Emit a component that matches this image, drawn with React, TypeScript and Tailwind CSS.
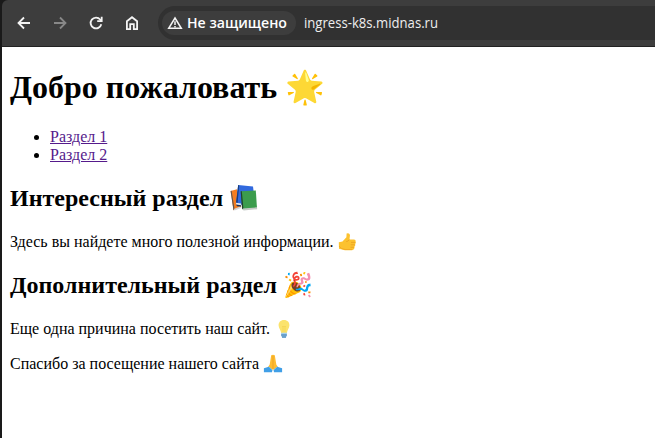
function Books() {
  return (
    <svg className="ml-[6px] h-[28px] w-[30px]" viewBox="0 0 30 28">
      <path d="M1.6 7 8 5.3 12 23 4.5 26.3Z" fill="#f47d20" />
      <path d="M1.6 7 2.6 6.7 5.6 25.4 4.5 26.3Z" fill="#5b5450" />
      <path d="M4.8 25 11 22.4 12 24 5.5 26.6Z" fill="#d5d5d5" />
      <path d="M9.2 1 24 2.4 25.5 14 12 21 7 19Z" fill="#3169de" />
      <path d="M9.2 1 10.2 1.2 8.5 19.5 7 19Z" fill="#173c7c" />
      <path d="M7 18.8 12 19.5 12 21.4 7.2 20.8Z" fill="#e2e5e8" />
      <path d="M7 20.5 12 21.2 12 22.6 8 22.2Z" fill="#18345e" />
      <path d="M11.7 7.3 26.8 6.4 28 24.2 13.5 25.4Z" fill="#3b9c4d" />
      <path d="M11.7 7.3 12.8 7.2 14.5 25 13 25Z" fill="#21402b" />
      <path d="M13.5 24.4 28 23.3 28.2 25.2 14.5 26.6Z" fill="#c4c9c5" />
    </svg>
  );
}

function ThumbsUp() {
  return (
    <svg className="ml-[3px] h-[20px] w-[20px] shrink-0" viewBox="0 0 20 20">
      <path d="M1.8 10.2 5.5 9.6 9.4 5.2 9.6 1.5Q12.3.4 13 3L12.5 7.4H17Q19 7.5 18.6 9.6 19.3 11 18.2 12.1 18.7 13.8 17.5 14.6 17.8 17.7 15 18.2H8L2 16.8Z" fill="#fcc22f" />
      <path d="M12.3 7.6Q11 9.6 9.3 9.6M14 10.4H18.2M13.7 12.8H17.8M13.5 15.3H17" fill="none" stroke="#e59b20" strokeWidth=".7" />
      <path d="M2 14Q4 17.2 8 17.5H15" fill="none" stroke="#f1a624" strokeWidth=".8" />
    </svg>
  );
}

function Bulb() {
  return (
    <svg className="ml-[4px] h-[20px] w-[20px] shrink-0" viewBox="0 0 20 20">
      <path d="M10 1C6.4 1 4.5 3.4 4.6 6.5 4.7 9.4 7 11.2 7.2 14.5H12.8C13.1 11.1 15.3 9.3 15.4 6.5 15.6 3.3 13.4 1 10 1Z" fill="#fbe36c" />
      <path d="M8 7 9 8 10 7 11 8 12 7M9 8V13M11 8V13" fill="none" stroke="#efca42" strokeWidth=".5" />
      <path d="M7.1 13.8H12.9V17L11.8 18.7H8.2L7.1 17Z" fill="#a4d0ee" />
      <path d="M7.2 16H12.8M8 18H12" stroke="#2466a2" strokeWidth=".9" />
    </svg>
  );
}

function Hands() {
  return (
    <svg className="ml-[4px] h-[20px] w-[20px] shrink-0" viewBox="0 0 20 20">
      <path d="M8.2 1.2Q10 .4 11.8 1.2L13.3 10.5 15.5 14 11.5 17 10 15 8.5 17 4.5 14 6.7 10.5Z" fill="#fdbc32" />
      <path d="M10 2V15" stroke="#e79b20" strokeWidth=".7" />
      <path d="M.9 14.2 5.8 12.8 9.4 16 9 18.2H.9Z M19.1 14.2 14.2 12.8 10.6 16 11 18.2H19.1Z" fill="#409fe7" />
      <path d="M5.8 12.8 9.3 16M14.2 12.8 10.7 16" stroke="#79c5f5" strokeWidth=".8" />
    </svg>
  );
}

export default function App() {
  return (
    <div className="flex h-[438px] w-[655px] overflow-hidden bg-[#1a1a1a] font-['Liberation_Serif','Noto_Color_Emoji',serif] text-black">
      <div className="w-[2px] shrink-0 bg-[#1a1a1a]" />
      <div className="flex min-w-0 flex-1 flex-col">
        <header className="flex h-[47px] shrink-0 items-center rounded-tl-[6px] border-b border-[#222] bg-[#3d3d3d] pl-[14px] font-['Open_Sans','Noto_Sans',sans-serif] text-[#eee]">
          <nav className="flex items-center gap-[20px]">
            <svg width="16" height="16" viewBox="0 0 16 16" fill="none" stroke="#f4f4f4" strokeWidth="1.8"><path d="M14 8H3M8 2.5 2.5 8 8 13.5" /></svg>
            <svg width="16" height="16" viewBox="0 0 16 16" fill="none" stroke="#888" strokeWidth="1.8"><path d="M2 8H13M8 2.5 13.5 8 8 13.5" /></svg>
            <svg width="16" height="16" viewBox="0 0 16 16" fill="none" stroke="#f4f4f4" strokeWidth="1.8"><path d="M13.3 9.2A5.4 5.4 0 1 1 12.2 4.5L13.4 6" /><path d="M13.7 1.8V6.2H9.2" /></svg>
            <svg width="16" height="16" viewBox="0 0 16 16" fill="none" stroke="#f4f4f4" strokeWidth="1.8"><path d="M2.9 6.2 8 2.2 13.1 6.2V14.1H9.8V9.2H6.2V14.1H2.9Z" /></svg>
          </nav>
          <div className="ml-[18px] flex h-[34px] flex-1 items-center rounded-l-full bg-[#313131] pl-[4px]">
            <div className="flex h-[24px] w-[134px] items-center rounded-full bg-[#3d3d3d] pl-[5px]">
              <svg width="16" height="14" viewBox="0 0 16 14" fill="none" stroke="#f4f4f4" strokeWidth="1.5"><path d="M8 2 14.3 12.3H1.7Z" /><path d="M8 5.2V9M8 10V11.4" /></svg>
              <svg className="ml-[4px]" width="102" height="24"><text x="0" y="16.5" textLength="100" lengthAdjust="spacingAndGlyphs" fill="#fff" fontSize="14" fontWeight="600">Не защищено</text></svg>
            </div>
            <svg className="ml-[8px] overflow-visible" width="138" height="24"><text x="0" y="16.5" textLength="134" lengthAdjust="spacingAndGlyphs" fill="#eee" fontSize="14.5">ingress-k8s.midnas.ru</text></svg>
          </div>
        </header>
        <main className="flex flex-1 flex-col bg-white pl-[8px] pt-[22px]">
          <h1 className="h-[37px] whitespace-pre text-[32px] leading-[37px] font-bold">Добро пожаловать 🌟</h1>
          <ul className="mt-[22px] list-disc pl-[40px] text-[16px] leading-[18px] text-black">
            <li><span className="text-[#551a8b] underline">Раздел 1</span></li>
            <li><span className="text-[#551a8b] underline">Раздел 2</span></li>
          </ul>
          <h2 className="mt-[20px] flex h-[28px] items-center text-[24px] leading-[28px] font-bold">Интересный раздел<Books /></h2>
          <p className="mt-[20px] flex h-[19px] items-center text-[16px] leading-[19px]">Здесь вы найдете много полезной информации.<ThumbsUp /></p>
          <h2 className="mt-[20px] h-[28px] text-[24px] leading-[28px] font-bold">Дополнительный раздел 🎉</h2>
          <p className="mt-[20px] flex h-[19px] items-center text-[16px] leading-[19px]">Еще одна причина посетить наш сайт.<Bulb /></p>
          <p className="mt-[16px] flex h-[19px] items-center text-[16px] leading-[19px]">Спасибо за посещение нашего сайта<Hands /></p>
        </main>
      </div>
    </div>
  );
}
